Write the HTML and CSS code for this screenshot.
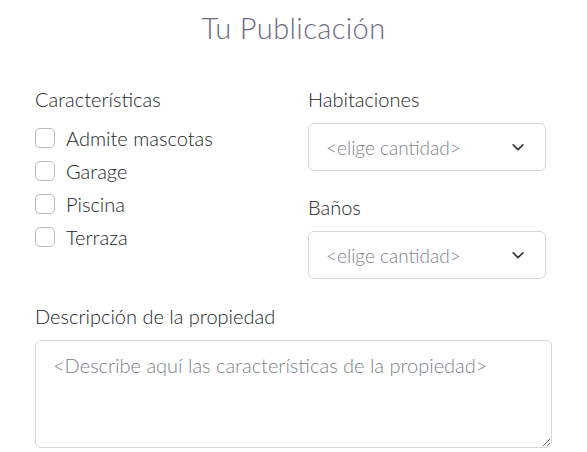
FILE: index.html
```html
<!DOCTYPE html>
<html lang="es">
<head>
<meta charset="utf-8">
<title>Tu Publicación</title>
<link rel="stylesheet" href="styles.css">
</head>
<body>
<main class="page">
  <h1 class="title">Tu Publicación</h1>
  <div class="grid">
    <section class="col-left">
      <div class="label">Características</div>
      <ul class="checks">
        <li class="check"><input type="checkbox" class="box" id="c1"><label for="c1">Admite mascotas</label></li>
        <li class="check"><input type="checkbox" class="box" id="c2"><label for="c2">Garage</label></li>
        <li class="check"><input type="checkbox" class="box" id="c3"><label for="c3">Piscina</label></li>
        <li class="check"><input type="checkbox" class="box" id="c4"><label for="c4">Terraza</label></li>
      </ul>
    </section>
    <section class="col-right">
      <div class="label">Habitaciones</div>
      <div class="select">
        <span class="placeholder">&lt;elige cantidad&gt;</span>
        <svg class="chev" width="14" height="14" viewBox="0 0 16 16"><path d="M2.5 5.5l5.5 5.5 5.5-5.5" fill="none" stroke="#343a40" stroke-width="2" stroke-linecap="round" stroke-linejoin="round"/></svg>
      </div>
      <div class="label label-gap">Baños</div>
      <div class="select">
        <span class="placeholder">&lt;elige cantidad&gt;</span>
        <svg class="chev" width="14" height="14" viewBox="0 0 16 16"><path d="M2.5 5.5l5.5 5.5 5.5-5.5" fill="none" stroke="#343a40" stroke-width="2" stroke-linecap="round" stroke-linejoin="round"/></svg>
      </div>
    </section>
  </div>
  <div class="label desc-label">Descripción de la propiedad</div>
  <textarea class="area" placeholder="<Describe aquí las características de la propiedad>"></textarea>
</main>
</body>
</html>
```
FILE: styles.css
```css
* { box-sizing: border-box; }
html, body { margin: 0; padding: 0; background: #fff; }
body {
  font-family: Lato, "Noto Sans", sans-serif;
  font-weight: 300;
  color: #212529;
}
.page {
  width: 517px;
  margin: 0 auto;
}
.title {
  margin: 0;
  padding-top: 10px;
  font-size: 29px;
  line-height: 36px;
  font-weight: 300;
  text-align: center;
  color: #6a6a82;
  letter-spacing: 0.4px;
}
.grid {
  display: grid;
  grid-template-columns: 273px 238px;
  margin-top: 41px;
}
.label {
  font-size: 20px;
  line-height: 24px;
  color: #212529;
}
.checks {
  list-style: none;
  margin: 10px 0 0;
  padding: 0;
}
.check {
  display: flex;
  align-items: center;
  height: 33px;
}
.box {
  appearance: none;
  -webkit-appearance: none;
  width: 20px;
  height: 20px;
  margin: 0 11px 0 0;
  border: 1px solid #b9bcc0;
  border-radius: 5px;
  background: #fff;
}
.check label {
  font-size: 20px;
  line-height: 24px;
  color: #212529;
}
.select {
  display: flex;
  align-items: center;
  justify-content: space-between;
  height: 48px;
  margin-top: 12px;
  padding: 0 20px 0 17px;
  border: 1px solid #d3d6da;
  border-radius: 6px;
}
.placeholder {
  font-size: 19px;
  color: #7d8289;
}
.chev { display: block; }
.label-gap { margin-top: 24px; }
.desc-label { margin-top: 25px; }
.area {
  display: block;
  width: 517px;
  height: 108px;
  margin: 12px 0 0;
  padding: 12px 17px;
  border: 1px solid #d3d6da;
  border-radius: 6px;
  font-family: Lato, "Noto Sans", sans-serif;
  font-weight: 300;
  font-size: 20px;
  color: #212529;
  resize: both;
}
.area::placeholder {
  color: #7d8289;
}
```
